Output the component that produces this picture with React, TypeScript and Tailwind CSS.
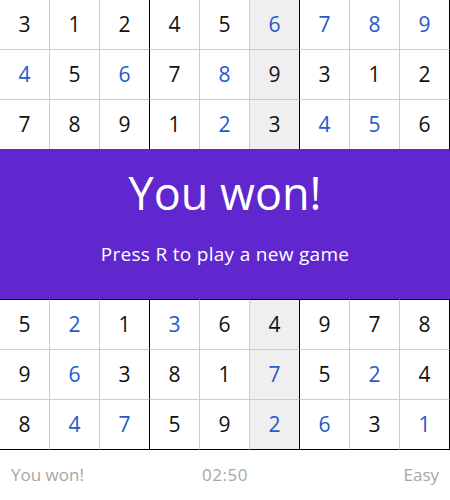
import React from "react";

const rows: string[] = [
  "312456789",
  "456789312",
  "789123456",
  "         ",
  "         ",
  "         ",
  "521364978",
  "963817524",
  "847592631",
];

const blue: string[] = [
  "000001111",
  "101010000",
  "000010110",
  "000000000",
  "000000000",
  "000000000",
  "010100000",
  "010001010",
  "011001101",
];

export default function App() {
  return (
    <div
      className="w-[450px] h-[500px] bg-white overflow-hidden"
      style={{ fontFamily: "'Open Sans', Lato, sans-serif" }}
    >
      <div className="relative w-[450px] h-[450px] grid grid-cols-9">
        {rows.map((row, r) =>
          row.split("").map((d, c) => {
            const right = c === 2 || c === 5 || c === 8 ? "border-r-black" : "border-r-[#cccccc]";
            const bottom = r === 2 || r === 5 || r === 8 ? "border-b-black" : "border-b-[#cccccc]";
            const bg = c === 5 ? "bg-[#efefef]" : "bg-white";
            const color = blue[r][c] === "1" ? "text-[#2459cf]" : "text-[#111111]";
            return (
              <div
                key={`${r}-${c}`}
                className={`h-[50px] border-r border-b ${right} ${bottom} ${bg} ${color} flex items-center justify-center text-[21px]`}
              >
                {d.trim()}
              </div>
            );
          })
        )}
        <div className="absolute left-0 top-[149px] w-[450px] h-[150px] bg-[#5f27cd] text-white flex flex-col items-center pt-[16px]">
          <div className="text-[45px] leading-[56px]">You won!</div>
          <div className="text-[19px] leading-[24px] tracking-[0.3px] mt-[21px]">Press R to play a new game</div>
        </div>
      </div>
      <div className="h-[50px] grid grid-cols-3 items-center px-[11px] text-[17px] text-[#a6a6a6]">
        <span className="text-left">You won!</span>
        <span className="text-center tracking-[0.5px]">02:50</span>
        <span className="text-right">Easy</span>
      </div>
    </div>
  );
}
